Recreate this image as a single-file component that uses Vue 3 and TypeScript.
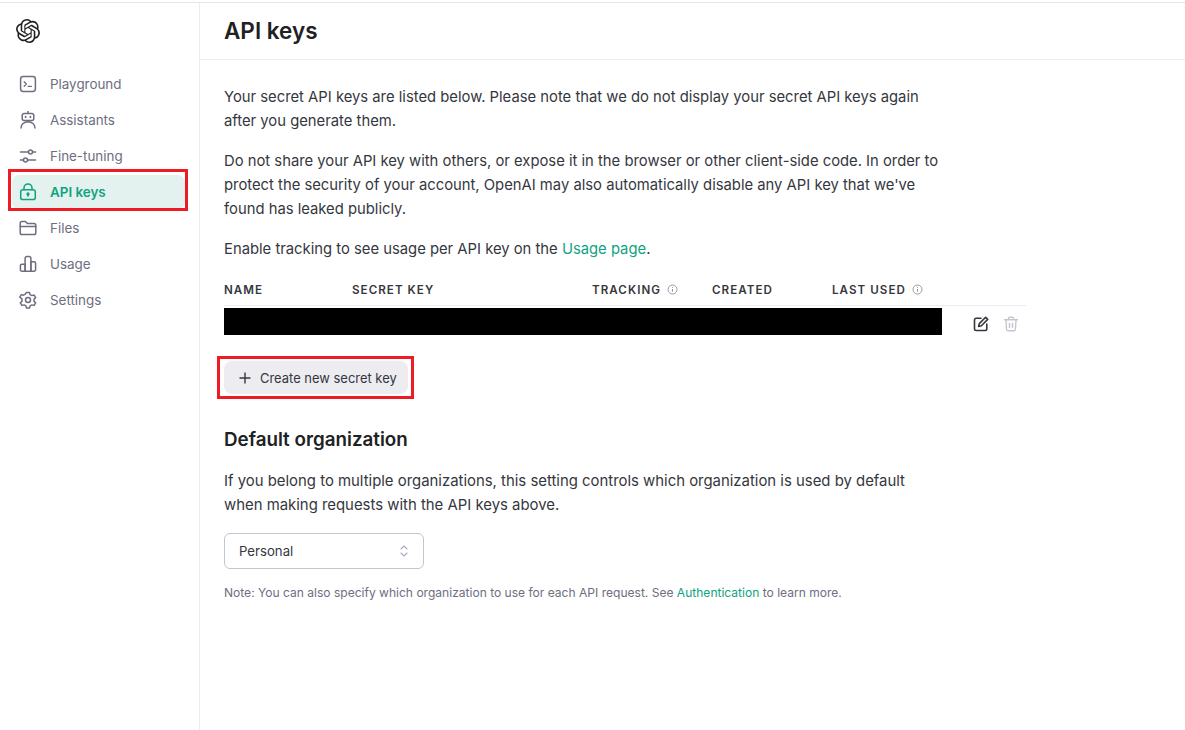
<script setup lang="ts">
interface NavItem { label: string; icon: string; active?: boolean }
const nav: NavItem[] = [
  { label: 'Playground', icon: 'play' },
  { label: 'Assistants', icon: 'bot' },
  { label: 'Fine-tuning', icon: 'tune' },
  { label: 'API keys', icon: 'lock', active: true },
  { label: 'Files', icon: 'folder' },
  { label: 'Usage', icon: 'usage' },
  { label: 'Settings', icon: 'gear' },
]
</script>

<template>
  <div class="page">
    <aside class="sidebar">
      <div class="logo">
        <svg width="24" height="24" viewBox="0 0 24 24" fill="#202123"><path d="M22.2819 9.8211a5.9847 5.9847 0 0 0-.5157-4.9108 6.0462 6.0462 0 0 0-6.5098-2.9A6.0651 6.0651 0 0 0 4.9807 4.1818a5.9847 5.9847 0 0 0-3.9977 2.9 6.0462 6.0462 0 0 0 .7427 7.0966 5.98 5.98 0 0 0 .511 4.9107 6.051 6.051 0 0 0 6.5146 2.9001A5.9847 5.9847 0 0 0 13.2599 24a6.0557 6.0557 0 0 0 5.7718-4.2058 5.9894 5.9894 0 0 0 3.9977-2.9001 6.0557 6.0557 0 0 0-.7475-7.0729zm-9.022 12.6081a4.4755 4.4755 0 0 1-2.8764-1.0408l.1419-.0804 4.7783-2.7582a.7948.7948 0 0 0 .3927-.6813v-6.7369l2.02 1.1686a.071.071 0 0 1 .038.052v5.5826a4.504 4.504 0 0 1-4.4945 4.4944zm-9.6607-4.1254a4.4708 4.4708 0 0 1-.5346-3.0137l.142.0852 4.783 2.7582a.7712.7712 0 0 0 .7806 0l5.8428-3.3685v2.3324a.0804.0804 0 0 1-.0332.0615L9.74 19.9502a4.4992 4.4992 0 0 1-6.1408-1.6464zM2.3408 7.8956a4.485 4.485 0 0 1 2.3655-1.9728V11.6a.7664.7664 0 0 0 .3879.6765l5.8144 3.3543-2.0201 1.1685a.0757.0757 0 0 1-.071 0l-4.8303-2.7865A4.504 4.504 0 0 1 2.3408 7.872zm16.5963 3.8558L13.1038 8.364 15.1192 7.2a.0757.0757 0 0 1 .071 0l4.8303 2.7913a4.4944 4.4944 0 0 1-.6765 8.1042v-5.6772a.79.79 0 0 0-.407-.667zm2.0107-3.0231l-.142-.0852-4.7735-2.7818a.7759.7759 0 0 0-.7854 0L9.409 9.2297V6.8974a.0662.0662 0 0 1 .0284-.0615l4.8303-2.7866a4.4992 4.4992 0 0 1 6.6802 4.66zM8.3065 12.863l-2.02-1.1638a.0804.0804 0 0 1-.038-.0567V6.0742a4.4992 4.4992 0 0 1 7.3757-3.4537l-.142.0805L8.704 5.459a.7948.7948 0 0 0-.3927.6813zm1.0976-2.3654l2.602-1.4998 2.6069 1.4998v2.9994l-2.5974 1.4997-2.6067-1.4997Z"/></svg>
      </div>
      <nav class="nav">
        <div v-for="item in nav" :key="item.label" class="nav-item" :class="{ active: item.active }">
          <svg class="nav-icon" width="18" height="18" viewBox="0 0 18 18" fill="none" stroke="currentColor" stroke-width="1.5" stroke-linecap="round" stroke-linejoin="round">
            <template v-if="item.icon === 'play'">
              <rect x="1.6" y="1.6" width="14.8" height="14.8" rx="2.6" />
              <path d="M5.2 6.8 7.4 9l-2.2 2.2M9.2 11.4h3.2" stroke-width="1.3" />
            </template>
            <template v-else-if="item.icon === 'bot'">
              <path d="M9 .6v1.6" />
              <rect x="3.2" y="2.4" width="11.6" height="7" rx="2" />
              <path d="M6.6 5.6v.6M11.4 5.6v.6" stroke-width="1.7" />
              <path d="M9 9.4v1.4" />
              <path d="M2 17c0-3.6 3-6.2 7-6.2s7 2.6 7 6.2" />
            </template>
            <template v-else-if="item.icon === 'tune'">
              <path d="M1.5 5h8M13.5 5h3M1.5 13h3M8.5 13h8" />
              <circle cx="11.5" cy="5" r="2" />
              <circle cx="6.5" cy="13" r="2" />
            </template>
            <template v-else-if="item.icon === 'lock'">
              <rect x="1.7" y="6.8" width="14.6" height="9.8" rx="2.2" />
              <path d="M5 6.8V4.9a4 4 0 0 1 8 0v1.9" />
              <circle cx="9" cy="11" r=".9" fill="currentColor" />
              <path d="M9 11.5v1.6" />
            </template>
            <template v-else-if="item.icon === 'folder'">
              <path d="M1.2 4.2c0-1 .8-1.8 1.8-1.8h3.4l2 2.2h6.6c1 0 1.8.8 1.8 1.8v7.4c0 1-.8 1.8-1.8 1.8H3c-1 0-1.8-.8-1.8-1.8z" />
              <path d="M1.2 7.6h15.6" />
            </template>
            <template v-else-if="item.icon === 'usage'">
              <path d="M1.4 10.6c0-.8.6-1.4 1.4-1.4h3.3v7H2.8c-.8 0-1.4-.6-1.4-1.4z" />
              <path d="M6.1 3.4c0-1.1.9-2 2-2h1.8c1.1 0 2 .9 2 2v12.8H6.1z" />
              <path d="M11.9 6.8h3.3c.8 0 1.4.6 1.4 1.4v6.6c0 .8-.6 1.4-1.4 1.4h-3.3z" />
            </template>
            <template v-else>
              <circle cx="9" cy="9" r="2.5" />
              <path d="M7.5 1.4h3l.6 2.2 1.8 1 2.2-.6 1.5 2.6-1.6 1.6v2.1l1.6 1.6-1.5 2.6-2.2-.6-1.8 1-.6 2.2h-3l-.6-2.2-1.8-1-2.2.6-1.5-2.6 1.6-1.6V7.8L.8 6.2 2.3 3.6l2.2.6 1.8-1z" />
            </template>
          </svg>
          <span>{{ item.label }}</span>
        </div>
      </nav>
    </aside>

    <main class="main">
      <header class="header"><h1>API keys</h1></header>
      <section class="content">
        <div class="copy">
          <p>Your secret API keys are listed below. Please note that we do not display your secret API keys again after you generate them.</p>
          <p>Do not share your API key with others, or expose it in the browser or other client-side code. In order to protect the security of your account, OpenAI may also automatically disable any API key that we've found has leaked publicly.</p>
          <p>Enable tracking to see usage per API key on the <a class="link">Usage page</a>.</p>
        </div>

        <div class="table">
          <div class="thead">
            <span class="col-name">NAME</span>
            <span class="col-key">SECRET KEY</span>
            <span class="col-track">TRACKING
              <svg class="info" width="11" height="11" viewBox="0 0 11 11" fill="none" stroke="currentColor"><circle cx="5.5" cy="5.5" r="4.5" stroke-width=".9" /><path d="M5.5 5v2.6M5.5 3.2v.7" stroke-width="1" /></svg>
            </span>
            <span class="col-created">CREATED</span>
            <span class="col-used">LAST USED
              <svg class="info" width="11" height="11" viewBox="0 0 11 11" fill="none" stroke="currentColor"><circle cx="5.5" cy="5.5" r="4.5" stroke-width=".9" /><path d="M5.5 5v2.6M5.5 3.2v.7" stroke-width="1" /></svg>
            </span>
          </div>
          <div class="trow">
            <div class="redacted"></div>
            <div class="actions">
              <svg width="16" height="16" viewBox="0 0 16 16" fill="none" stroke="#353740" stroke-width="1.6" stroke-linecap="round" stroke-linejoin="round">
                <path d="M8 2.2H3.2c-1 0-1.7.8-1.7 1.7v8.9c0 1 .7 1.7 1.7 1.7h8.9c1 0 1.7-.8 1.7-1.7V8" />
                <path d="M12.6 1.3 14.7 3.4 8.4 9.7l-2.8.7.7-2.8z" />
              </svg>
              <svg width="16" height="16" viewBox="0 0 16 16" fill="none" stroke="#c5c5d2" stroke-width="1.4" stroke-linecap="round" stroke-linejoin="round">
                <path d="M1.6 3.8h12.8M5.4 3.6V2.8c0-.9.7-1.6 1.6-1.6h2c.9 0 1.6.7 1.6 1.6v.8" />
                <path d="M3 3.8l.6 9.7c.1.8.7 1.3 1.5 1.3h5.8c.8 0 1.4-.5 1.5-1.3l.6-9.7" />
                <path d="M6.5 7.2v4.4M9.5 7.2v4.4" />
              </svg>
            </div>
          </div>
        </div>

        <div class="btn-wrap">
          <button class="btn" type="button">
            <svg width="12" height="12" viewBox="0 0 12 12" fill="none" stroke="#353740" stroke-width="1.4" stroke-linecap="round"><path d="M6 1v10M1 6h10" /></svg>
            <span>Create new secret key</span>
          </button>
        </div>

        <h2>Default organization</h2>
        <p class="org-copy">If you belong to multiple organizations, this setting controls which organization is used by default when making requests with the API keys above.</p>
        <div class="select">
          <span>Personal</span>
          <svg width="10" height="14" viewBox="0 0 10 14" fill="none" stroke="#acacbe" stroke-width="1.1" stroke-linecap="round" stroke-linejoin="round"><path d="M2 5 5 2l3 3M2 9l3 3 3-3" /></svg>
        </div>
        <p class="note">Note: You can also specify which organization to use for each API request. See <a class="link">Authentication</a> to learn more.</p>
      </section>
    </main>
  </div>
</template>

<style>
html, body { margin: 0; background: #fff; }
</style>

<style scoped>
.page {
  display: flex;
  height: 728px;
  margin-top: 2px;
  box-sizing: border-box;
  border-top: 1px solid #e5e5e5;
  overflow: hidden;
  background: #fff;
  font-family: Inter, "Liberation Sans", sans-serif;
  color: #353740;
}
.sidebar {
  width: 200px;
  flex: none;
  box-sizing: border-box;
  border-right: 1px solid #ececf1;
  padding: 16px 14px 0 12px;
}
.logo { height: 24px; padding-left: 4px; margin-bottom: 24px; }
.logo svg { display: block; }
.nav { display: flex; flex-direction: column; gap: 2px; }
.nav-item {
  height: 34px;
  display: flex;
  align-items: center;
  gap: 13px;
  padding-left: 7px;
  border-radius: 7px;
  font-size: 13.4px;
  color: #6e6e80;
  box-sizing: border-box;
}
.nav-icon { flex: none; color: #6e6e80; }
.nav-item.active {
  background: #e3f2ef;
  color: #10a37f;
  font-weight: 600;
  position: relative;
}
.nav-item.active::after {
  content: "";
  position: absolute;
  inset: -6px -3px -2px -4px;
  border: 3px solid #ed1c24;
  pointer-events: none;
}
.nav-item.active .nav-icon { color: #10a37f; }
.main { flex: 1; min-width: 0; }
.header {
  height: 57px;
  box-sizing: border-box;
  border-bottom: 1px solid #ececf1;
  padding-left: 24px;
  display: flex;
  align-items: center;
}
h1 { margin: 0 0 1px; font-size: 22.5px; line-height: 28px; font-weight: 600; color: #202123; }
.content { padding: 25px 24px 0; }
.copy { width: 720px; font-size: 14.8px; line-height: 24px; color: #353740; }
.copy p { margin: 0 0 16px; }
.copy p:last-child { margin-bottom: 12px; }
.link { color: #10a37f; }
.table { width: 802px; }
.thead {
  display: flex;
  height: 33px;
  align-items: center;
  box-sizing: border-box;
  border-bottom: 1px solid #ececf1;
  padding-top: 1px;
  font-size: 11.6px;
  font-weight: 600;
  letter-spacing: 1.05px;
  color: #353740;
}
.thead span { display: flex; align-items: center; gap: 2px; box-sizing: border-box; white-space: pre; }
.col-name { width: 128px; }
.col-key { width: 240px; }
.col-track, .col-created, .col-used { width: 120px; }
.info { color: #8e8ea0; }
.trow { display: flex; align-items: center; height: 36px; padding-top: 3px; box-sizing: border-box; }
.redacted { width: 718px; height: 27px; background: #000; margin-bottom: 9px; }
.actions { display: flex; gap: 14px; margin-left: 31px; margin-bottom: 4px; }
.btn-wrap {
  display: inline-block;
  margin: 14px 0 0 -7px;
  padding: 2px 3px 2px 4px;
  border: 3px solid #ed1c24;
  box-sizing: border-box;
  height: 43px;
  vertical-align: top;
}
.btn {
  display: flex;
  align-items: center;
  gap: 9px;
  height: 33px;
  width: 184px;
  box-sizing: border-box;
  padding: 0 0 0 15px;
  border: 0;
  border-radius: 8px;
  background: #ececf1;
  color: #353740;
  font-family: inherit;
  font-size: 12.95px;
  font-weight: 400;
}
h2 { margin: 27px 0 0; font-size: 18.8px; line-height: 28px; font-weight: 600; color: #202123; }
.org-copy { width: 700px; margin: 15px 0 0; font-size: 14.9px; line-height: 24px; color: #353740; }
.select {
  width: 200px;
  height: 36px;
  box-sizing: border-box;
  margin-top: 16px;
  border: 1px solid #c5c5d2;
  border-radius: 6px;
  padding: 0 14px 0 14px;
  display: flex;
  align-items: center;
  justify-content: space-between;
  font-size: 13.2px;
  color: #353740;
}
.note { margin: 16px 0 0; font-size: 12.05px; line-height: 16px; color: #6e6e80; }
</style>
